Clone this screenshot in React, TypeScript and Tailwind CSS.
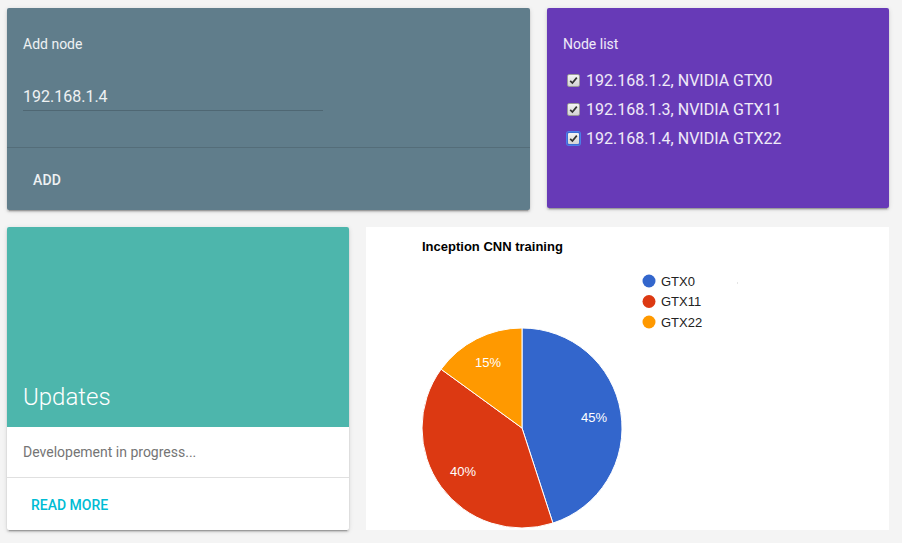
import React from 'react'

const nodes = [
  { ip: '192.168.1.2', gpu: 'NVIDIA GTX0', focused: false },
  { ip: '192.168.1.3', gpu: 'NVIDIA GTX11', focused: false },
  { ip: '192.168.1.4', gpu: 'NVIDIA GTX22', focused: true },
]

const Check = ({ focused }: { focused: boolean }) => (
  <span
    className={
      'flex h-[13px] w-[13px] items-center justify-center rounded-[2px] border bg-gradient-to-b from-[#f4f4f4] to-[#d4d4d4] ' +
      (focused ? 'border-[#3b6fd6] ring-1 ring-[#4d7ee8]' : 'border-[#9a9a9a]')
    }
  >
    <svg width="9" height="9" viewBox="0 0 9 9">
      <path d="M1.2 4.8 L3.4 7 L7.8 1.6" fill="none" stroke="#333" strokeWidth="1.7" />
    </svg>
  </span>
)

const slices = [
  { label: 'GTX0', value: 45, color: '#3366cc' },
  { label: 'GTX11', value: 40, color: '#dc3912' },
  { label: 'GTX22', value: 15, color: '#ff9900' },
]

const PieChart = () => {
  const cx = 156
  const cy = 201
  const r = 100
  let acc = 0
  const pt = (pct: number, rad: number) => {
    const a = (pct / 100) * Math.PI * 2
    return [cx + rad * Math.sin(a), cy - rad * Math.cos(a)]
  }
  const labelPos = [
    [228, 190],
    [97, 244],
    [122, 135],
  ]
  return (
    <svg width="523" height="303" viewBox="0 0 523 303" style={{ fontFamily: '"Liberation Sans", Arial, sans-serif' }}>
      <text x="56" y="24" fontSize="13" fontWeight="bold" fill="#000">Inception CNN training</text>
      {slices.map((s) => {
        const [x1, y1] = pt(acc, r)
        acc += s.value
        const [x2, y2] = pt(acc, r)
        const large = s.value > 50 ? 1 : 0
        return (
          <path
            key={s.label}
            d={`M${cx} ${cy} L${x1} ${y1} A${r} ${r} 0 ${large} 1 ${x2} ${y2} Z`}
            fill={s.color}
            stroke="#fff"
            strokeWidth="1"
          />
        )
      })}
      {slices.map((s, i) => (
        <text key={s.label + 'l'} x={labelPos[i][0]} y={labelPos[i][1] + 4.5} fontSize="13" fill="#fff" textAnchor="middle">
          {s.value}%
        </text>
      ))}
      {slices.map((s, i) => (
        <g key={s.label + 'g'}>
          <circle cx="283" cy={54 + i * 20.5} r="6.5" fill={s.color} />
          <text x="295" y={54 + i * 20.5 + 4.5} fontSize="13" fill="#222">{s.label}</text>
        </g>
      ))}
      <rect x="371" y="55.5" width="1" height="1" fill="#ccc" />
    </svg>
  )
}

const App = () => {
  return (
    <div className="min-h-screen w-[902px] h-[543px] bg-[#f4f4f4] pt-[8px] px-[7px] font-['Roboto',sans-serif]">
      <div className="flex gap-[17px] items-start">
        {/* Add node */}
        <div className="w-[523px] h-[202px] bg-[#607d8b] rounded-[2px] shadow-[0_2px_2px_0_rgba(0,0,0,0.14),0_3px_1px_-2px_rgba(0,0,0,0.2),0_1px_5px_0_rgba(0,0,0,0.12)] text-white flex flex-col">
          <div className="h-[140px] shrink-0 px-4 pt-[27px] border-b border-[#546d79]">
            <div className="text-[14px] leading-[18px] text-white/90">Add node</div>
            <div className="mt-[34px] w-[300px] border-b border-[#4f6773] pb-[3px]">
              <div className="text-[16px] leading-[20px] text-white/90">192.168.1.4</div>
            </div>
          </div>
          <div className="flex-1 flex items-center pl-[26px] pt-[2px]">
            <span className="text-[14px] font-medium tracking-[0.2px] text-white/90">ADD</span>
          </div>
        </div>

        {/* Node list */}
        <div className="w-[342px] h-[200px] bg-[#673ab7] rounded-[2px] shadow-[0_2px_2px_0_rgba(0,0,0,0.14),0_3px_1px_-2px_rgba(0,0,0,0.2),0_1px_5px_0_rgba(0,0,0,0.12)] text-white px-4 pt-[27px]">
          <div className="text-[14px] leading-[18px] text-white/90">Node list</div>
          <div className="mt-[13px] flex flex-col">
            {nodes.map((n) => (
              <div key={n.ip} className="flex items-center h-[29px] pl-[4px] gap-[6px]">
                <Check focused={n.focused} />
                <span className="text-[16px] text-white/90">{n.ip}, {n.gpu}</span>
              </div>
            ))}
          </div>
        </div>
      </div>

      <div className="mt-[17px] flex gap-[17px] items-start">
        {/* Updates */}
        <div className="w-[342px] h-[303px] bg-white rounded-[2px] overflow-hidden shadow-[0_2px_2px_0_rgba(0,0,0,0.14),0_3px_1px_-2px_rgba(0,0,0,0.2),0_1px_5px_0_rgba(0,0,0,0.12)] flex flex-col">
          <div className="h-[200px] shrink-0 bg-[#4db6ac] flex items-end px-4 pb-[14px]">
            <span className="text-[24px] leading-[32px] font-light text-white">Updates</span>
          </div>
          <div className="h-[51px] shrink-0 flex items-center px-4 border-b border-[#e0e0e0]">
            <span className="text-[14px] text-[#757575]">Developement in progress...</span>
          </div>
          <div className="flex-1 flex items-center pl-[24px] pt-[2px]">
            <span className="text-[14px] font-medium text-[#00bcd4]">READ MORE</span>
          </div>
        </div>

        {/* Chart */}
        <div className="w-[523px] h-[303px] bg-white">
          <PieChart />
        </div>
      </div>
    </div>
  )
}

export default App
